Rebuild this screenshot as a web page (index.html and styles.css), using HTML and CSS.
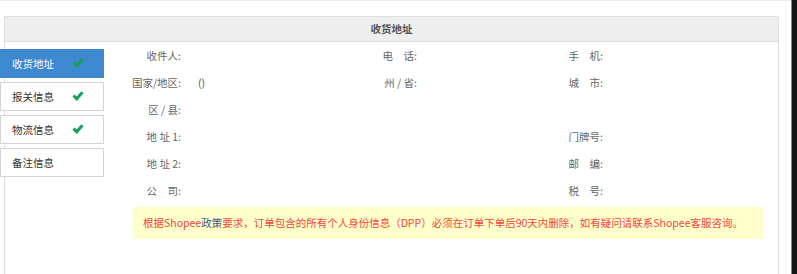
FILE: index.html
```html
<!DOCTYPE html>
<html lang="zh-CN">
<head>
    <meta charset="UTF-8">
    <title>收货地址</title>
    <link rel="stylesheet" href="styles.css">
</head>
<body>
    <div class="page">
        <div class="main">
            <div class="panel">
                <div class="panel-head">收货地址</div>
                <div class="panel-body">
                    <ul class="tabs">
                        <li class="tab active">收货地址 <span class="check"></span></li>
                        <li class="tab">报关信息 <span class="check"></span></li>
                        <li class="tab">物流信息 <span class="check"></span></li>
                        <li class="tab">备注信息</li>
                    </ul>

                    <div class="content">
                        <div class="form">
                            <div class="field"><span class="label">收件人:</span><span class="value"></span></div>
                            <div class="field"><span class="label">电　话:</span><span class="value"></span></div>
                            <div class="field"><span class="label">手　机:</span><span class="value"></span></div>

                            <div class="field"><span class="label">国家/地区:</span><span class="value">()</span></div>
                            <div class="field"><span class="label">州 / 省:</span><span class="value"></span></div>
                            <div class="field"><span class="label">城　市:</span><span class="value"></span></div>

                            <div class="field"><span class="label">区 / 县:</span><span class="value"></span></div>
                            <div class="field"></div>
                            <div class="field"></div>

                            <div class="field"><span class="label">地 址 1:</span><span class="value"></span></div>
                            <div class="field"></div>
                            <div class="field"><span class="label">门牌号:</span><span class="value"></span></div>

                            <div class="field"><span class="label">地 址 2:</span><span class="value"></span></div>
                            <div class="field"></div>
                            <div class="field"><span class="label">邮　编:</span><span class="value"></span></div>

                            <div class="field"><span class="label">公　司:</span><span class="value"></span></div>
                            <div class="field"></div>
                            <div class="field"><span class="label">税　号:</span><span class="value"></span></div>
                        </div>

                        <div class="notice">
                            根据Shopee<a href="#">政策</a>要求，订单包含的所有个人身份信息（DPP）必须在订单下单后90天内删除，如有疑问请联系Shopee客服咨询。
                        </div>
                    </div>
                </div>
            </div>
        </div>
        <div class="edge"></div>
    </div>
</body>
</html>
```

FILE: styles.css
```css
html, body {
    margin: 0;
    padding: 0;
    height: 100%;
    background: #fff;
    overflow: hidden;
}

body {
    font-family: "Noto Sans CJK SC", "Liberation Sans", sans-serif;
    font-size: 10.5px;
    color: #666;
}

.page {
    display: flex;
    height: 100%;
}

.main {
    flex: 1;
    border-top: 1px solid #ececec;
    padding: 15px 12px 0 4px;
}

.edge {
    width: 5px;
    background: #151515;
    border-left: 1px solid #8a8a8a;
}

.panel {
    border: 1px solid #e0e0e0;
    border-bottom: none;
    height: 100%;
}

.panel-head {
    height: 24px;
    line-height: 24px;
    background: #eeeeee;
    border-bottom: 1px solid #dadada;
    text-align: center;
    font-weight: bold;
    color: #555;
}

.panel-body {
    display: flex;
}

.tabs {
    list-style: none;
    margin: 7px 0 0 -5px;
    padding: 0;
    width: 104px;
    display: flex;
    flex-direction: column;
    gap: 4px;
}

.tab {
    box-sizing: border-box;
    height: 29px;
    line-height: 27px;
    padding-left: 11px;
    background: #fff;
    border: 1px solid #d4d4d4;
    color: #333;
    display: flex;
    align-items: center;
}

.tab.active {
    background: #3e88cf;
    border-color: #3e88cf;
    color: #fff;
}

.check {
    width: 7px;
    height: 3px;
    margin-left: 19px;
    margin-top: -3px;
    border-left: 3px solid #16a05d;
    border-bottom: 3px solid #16a05d;
    transform: rotate(-48deg);
}

.content {
    flex: 1;
    margin-left: 19px;
    padding-right: 15px;
}

.form {
    display: grid;
    grid-template-columns: 236px 186px 1fr;
    grid-auto-rows: 27px;
}

.field {
    display: flex;
    align-items: center;
}

.label {
    width: 58px;
    text-align: right;
    white-space: nowrap;
}

.value {
    padding-left: 17px;
    color: #555;
}

.notice {
    margin: 3px 0 0 10px;
    height: 32px;
    line-height: 32px;
    padding-left: 10px;
    background: #ffffcc;
    color: #f2453d;
    white-space: nowrap;
}

.notice a {
    color: #3a5d80;
    text-decoration: none;
}
```
